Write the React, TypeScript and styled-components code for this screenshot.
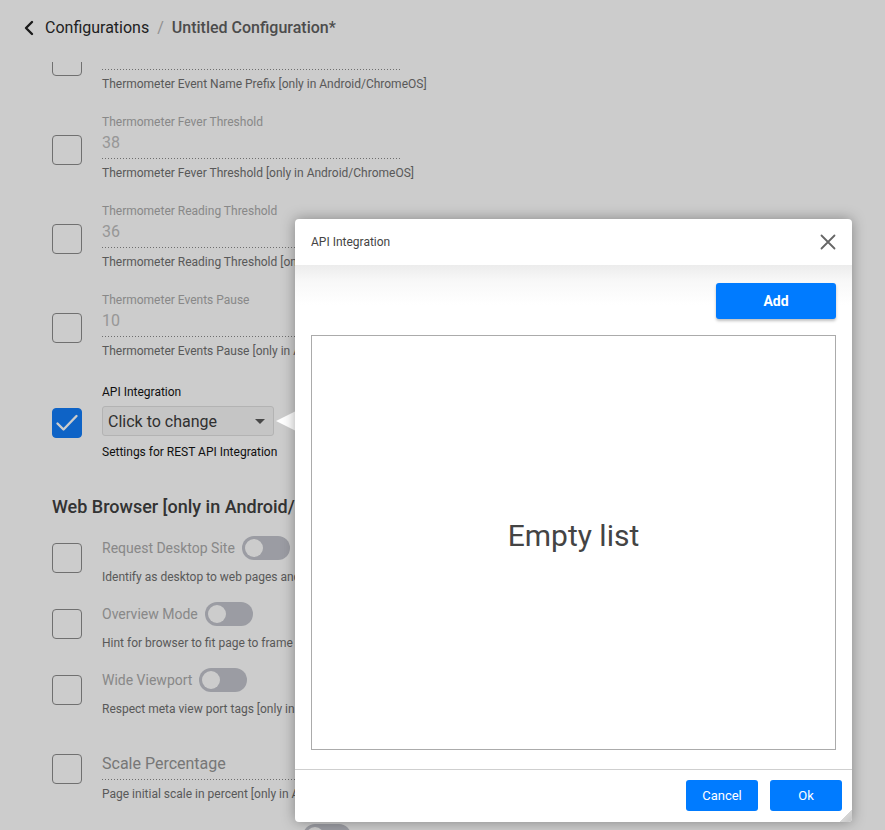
import React from "react";
import styled, { createGlobalStyle } from "styled-components";

const GlobalStyle = createGlobalStyle`
  html, body {
    margin: 0;
    padding: 0;
    background: #ffffff;
    font-family: Roboto, "Liberation Sans", Arial, sans-serif;
  }
  * { box-sizing: border-box; }
`;

const Page = styled.div`
  width: 885px;
  height: 830px;
  overflow: hidden;
  position: relative;
  background: #ffffff;
`;

const Header = styled.header`
  height: 62px;
  padding: 17px 0 0 22px;
  display: flex;
  align-items: flex-start;
  gap: 9px;
  position: relative;
  z-index: 1;
  background: #ffffff;
`;

const Crumbs = styled.div`
  display: flex;
  align-items: center;
  gap: 8px;
  font-size: 16px;
  line-height: 22px;
`;

const Crumb = styled.span<{ $current?: boolean }>`
  color: ${(p) => (p.$current ? "#606060" : "#2a2a2a")};
  font-weight: ${(p) => (p.$current ? 500 : 400)};
`;

const Slash = styled.span`
  color: #b5b5b5;
`;

const Scroller = styled.div`
  height: 768px;
  overflow: hidden;
`;

const Content = styled.div`
  margin-top: -38px;
  padding-left: 52px;
  display: flex;
  flex-direction: column;
`;

const RowList = styled.div<{ $gap: number }>`
  display: flex;
  flex-direction: column;
  gap: ${(p) => p.$gap}px;
`;

const Row = styled.div<{ $boxTop: number; $mt?: number }>`
  display: grid;
  grid-template-columns: 30px 1fr;
  column-gap: 20px;
  align-items: start;
  margin-top: ${(p) => p.$mt ?? 0}px;
  & > :first-child {
    margin-top: ${(p) => p.$boxTop}px;
  }
`;

const Check = styled.div<{ $checked?: boolean }>`
  width: 30px;
  height: 30px;
  border-radius: 4px;
  border: 1px solid ${(p) => (p.$checked ? "#127cf8" : "#8c8c8c")};
  background: ${(p) => (p.$checked ? "#127cf8" : "#ffffff")};
  display: flex;
  align-items: center;
  justify-content: center;
`;

const Field = styled.div`
  display: flex;
  flex-direction: column;
  width: 298px;
`;

const Label = styled.div<{ $dark?: boolean }>`
  margin-top: 1px;
  font-size: 12px;
  line-height: 16px;
  height: 16px;
  color: ${(p) => (p.$dark ? "#141414" : "#ababab")};
  white-space: nowrap;
`;

const Value = styled.div<{ $placeholder?: boolean }>`
  margin-top: 1px;
  font-size: 16px;
  line-height: 24px;
  height: 28px;
  padding-bottom: 4px;
  color: ${(p) => (p.$placeholder ? "#959595" : "#bdbdbd")};
  background-image: linear-gradient(to right, #8a8a8a 1px, transparent 1px);
  background-size: 3px 1px;
  background-repeat: repeat-x;
  background-position: 0 100%;
`;

const Helper = styled.div<{ $dark?: boolean; $mt?: number }>`
  margin-top: ${(p) => p.$mt ?? 6}px;
  font-size: 12px;
  line-height: 16px;
  color: ${(p) => (p.$dark ? "#141414" : "#707070")};
  white-space: nowrap;
`;

const Select = styled.div`
  margin-top: 6px;
  width: 172px;
  height: 30px;
  border: 1px solid #e0e0e0;
  border-radius: 3px;
  background: #f7f7f7;
  display: flex;
  align-items: center;
  justify-content: space-between;
  padding: 0 8px 0 5px;
  font-size: 16px;
  color: #3c3c3c;
`;

const Caret = styled.span`
  width: 0;
  height: 0;
  border-left: 5px solid transparent;
  border-right: 5px solid transparent;
  border-top: 5px solid #5a5a5a;
`;

const SectionTitle = styled.h2`
  margin: 35px 0 17px;
  font-size: 18px;
  line-height: 24px;
  font-weight: 500;
  color: #404040;
  white-space: nowrap;
`;

const SwitchLine = styled.div`
  display: flex;
  align-items: center;
  gap: 7px;
  height: 24px;
`;

const SwitchLabel = styled.span`
  font-size: 14px;
  color: #ababab;
  white-space: nowrap;
`;

const Switch = styled.span`
  width: 48px;
  height: 24px;
  border-radius: 12px;
  background: #c2c4cc;
  position: relative;
  flex: none;
  &::after {
    content: "";
    position: absolute;
    left: 3px;
    top: 3px;
    width: 18px;
    height: 18px;
    border-radius: 50%;
    background: #ffffff;
  }
`;

const Overlay = styled.div`
  position: absolute;
  inset: 0;
  background: rgba(0, 0, 0, 0.2);
  z-index: 5;
`;

const Pointer = styled.div`
  position: absolute;
  left: 276px;
  top: 411px;
  width: 0;
  height: 0;
  border-top: 10px solid transparent;
  border-bottom: 10px solid transparent;
  border-right: 20px solid #ffffff;
  z-index: 6;
`;

const Dialog = styled.div`
  position: absolute;
  left: 295px;
  top: 219px;
  width: 557px;
  height: 603px;
  background: #ffffff;
  border-radius: 4px;
  box-shadow: 0 0 14px rgba(0, 0, 0, 0.35);
  display: flex;
  flex-direction: column;
  z-index: 7;
  overflow: hidden;
  &::after {
    content: "";
    position: absolute;
    right: 0;
    bottom: 0;
    width: 12px;
    height: 12px;
    background: linear-gradient(135deg, transparent 50%, #d6d6d6 50%, #c4c4c4 100%);
  }
`;

const DialogHeader = styled.div`
  height: 46px;
  flex: none;
  display: flex;
  align-items: center;
  justify-content: space-between;
  padding: 0 16px 0 16px;
`;

const DialogTitle = styled.div`
  font-size: 12px;
  color: #444444;
`;

const CloseButton = styled.button`
  border: 0;
  background: transparent;
  padding: 0;
  width: 16px;
  height: 16px;
  display: flex;
  cursor: pointer;
`;

const DialogBody = styled.div`
  flex: 1;
  display: flex;
  flex-direction: column;
  padding: 18px 16px 19px;
  background: linear-gradient(to bottom, #ececec 0px, #f8f8f8 16px, #ffffff 40px);
`;

const Toolbar = styled.div`
  display: flex;
  justify-content: flex-end;
`;

const PrimaryButton = styled.button<{ $w: number; $h: number; $bold?: boolean; $size: number }>`
  width: ${(p) => p.$w}px;
  height: ${(p) => p.$h}px;
  border: 0;
  border-radius: 3px;
  background: #007bff;
  color: #ffffff;
  font-family: Roboto, "Liberation Sans", Arial, sans-serif;
  font-size: ${(p) => p.$size}px;
  font-weight: ${(p) => (p.$bold ? 700 : 400)};
  box-shadow: ${(p) => (p.$bold ? "0 2px 3px rgba(0,0,0,0.25)" : "none")};
  cursor: pointer;
`;

const ListBox = styled.div`
  margin-top: 16px;
  flex: 1;
  border: 1px solid #ababab;
  display: flex;
  align-items: center;
  justify-content: center;
  padding-bottom: 14px;
  font-size: 30px;
  color: #444444;
`;

const DialogFooter = styled.div`
  flex: none;
  border-top: 1px solid #cfcfcf;
  padding: 10px 10px 11px;
  display: flex;
  justify-content: flex-end;
  gap: 12px;
`;

const textRows = [
  { label: "", value: "", help: "Thermometer Event Name Prefix [only in Android/ChromeOS]" },
  { label: "Thermometer Fever Threshold", value: "38", help: "Thermometer Fever Threshold [only in Android/ChromeOS]" },
  { label: "Thermometer Reading Threshold", value: "36", help: "Thermometer Reading Threshold [only in Android/ChromeOS]" },
  { label: "Thermometer Events Pause", value: "10", help: "Thermometer Events Pause [only in Android/ChromeOS]" },
];

const switchRows = [
  { label: "Request Desktop Site", help: "Identify as desktop to web pages and load desktop versions [only in Android/ChromeOS]" },
  { label: "Overview Mode", help: "Hint for browser to fit page to frame [only in Android/ChromeOS]" },
  { label: "Wide Viewport", help: "Respect meta view port tags [only in Android/ChromeOS]" },
];

const CheckMark = () => (
  <svg width="26" height="26" viewBox="0 0 26 26" fill="none">
    <path d="M3.5 13.5 L9.5 19.5 L22.5 6" stroke="#ffffff" strokeWidth="2.4" strokeLinecap="round" strokeLinejoin="round" />
  </svg>
);

export default function App() {
  return (
    <Page>
      <GlobalStyle />
      <Header>
        <svg width="14" height="22" viewBox="0 0 14 22" fill="none">
          <path d="M10 5 L4 11 L10 17" stroke="#222" strokeWidth="2.4" strokeLinecap="round" strokeLinejoin="round" />
        </svg>
        <Crumbs>
          <Crumb>Configurations</Crumb>
          <Slash>/</Slash>
          <Crumb $current>Untitled Configuration*</Crumb>
        </Crumbs>
      </Header>
      <Scroller>
        <Content>
          <RowList $gap={21}>
            {textRows.map((r) => (
              <Row key={r.help} $boxTop={22}>
                <Check />
                <Field>
                  <Label>{r.label}</Label>
                  <Value>{r.value}</Value>
                  <Helper>{r.help}</Helper>
                </Field>
              </Row>
            ))}
            <Row $boxTop={25} $mt={3}>
              <Check $checked>
                <CheckMark />
              </Check>
              <Field>
                <Label $dark>API Integration</Label>
                <Select>
                  <span>Click to change</span>
                  <Caret />
                </Select>
                <Helper $dark $mt={8}>Settings for REST API Integration</Helper>
              </Field>
            </Row>
          </RowList>
          <SectionTitle>Web Browser [only in Android/ChromeOS]</SectionTitle>
          <RowList $gap={17}>
            {switchRows.map((r) => (
              <Row key={r.label} $boxTop={7}>
                <Check />
                <Field>
                  <SwitchLine>
                    <SwitchLabel>{r.label}</SwitchLabel>
                    <Switch />
                  </SwitchLine>
                  <Helper $mt={9}>{r.help}</Helper>
                </Field>
              </Row>
            ))}
            <Row $boxTop={20}>
              <Check />
              <Field>
                <Label />
                <Value $placeholder>Scale Percentage</Value>
                <Helper>Page initial scale in percent [only in Android/ChromeOS]</Helper>
              </Field>
            </Row>
            <Row $boxTop={7} $mt={5}>
              <Check />
              <Field>
                <SwitchLine>
                  <SwitchLabel>Media Playback Needs Gesture</SwitchLabel>
                  <Switch />
                </SwitchLine>
                <Helper $mt={9}>Require user gesture to play media [only in Android/ChromeOS]</Helper>
              </Field>
            </Row>
          </RowList>
        </Content>
      </Scroller>
      <Overlay />
      <Pointer />
      <Dialog>
        <DialogHeader>
          <DialogTitle>API Integration</DialogTitle>
          <CloseButton aria-label="Close">
            <svg width="16" height="16" viewBox="0 0 16 16" fill="none">
              <path d="M1.5 1.5 L14.5 14.5 M14.5 1.5 L1.5 14.5" stroke="#666" strokeWidth="1.8" strokeLinecap="round" />
            </svg>
          </CloseButton>
        </DialogHeader>
        <DialogBody>
          <Toolbar>
            <PrimaryButton $w={120} $h={36} $bold $size={14}>Add</PrimaryButton>
          </Toolbar>
          <ListBox>Empty list</ListBox>
        </DialogBody>
        <DialogFooter>
          <PrimaryButton $w={72} $h={31} $size={13}>Cancel</PrimaryButton>
          <PrimaryButton $w={72} $h={31} $size={13}>Ok</PrimaryButton>
        </DialogFooter>
      </Dialog>
    </Page>
  );
}
